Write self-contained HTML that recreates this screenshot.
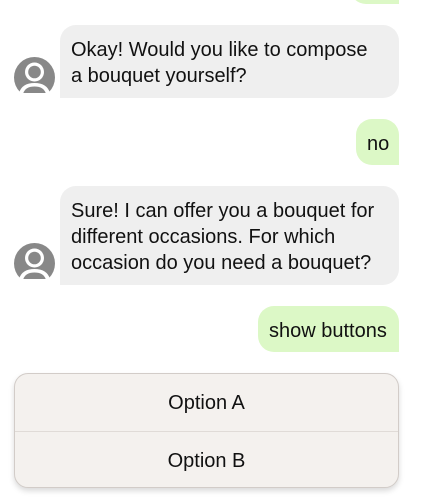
<!DOCTYPE html>
<html><head><style>
body{margin:0;width:421px;height:500px;overflow:hidden;background:#fff;font-family:"Liberation Sans",Arial,sans-serif;font-size:20px;color:#111;position:relative}
.b{position:absolute;box-sizing:border-box;line-height:26px;padding:12px 11px 9px;white-space:nowrap}
.bot{background:#efefef;border-radius:16px 16px 16px 0;left:60px;width:339px}
.me{background:#dcf8c6;border-radius:16px 16px 0 16px;right:22px}
.av{position:absolute;left:14px;width:41px;height:41px}
.opts{position:absolute;left:14px;top:373px;width:385px;height:115px;box-sizing:border-box;border:1px solid #d2ccc8;border-radius:14px;background:#f4f1ee;box-shadow:0 3px 6px rgba(0,0,0,.15);overflow:hidden}
.opts div{height:57px;line-height:59px;text-align:center;font-size:20px}
.opts div+div{border-top:1px solid #e0dbd7}
</style></head><body>
<div class="b me" style="top:-40px;width:49px;height:44px"></div>
<div class="b bot" style="top:25px;height:73px">Okay! Would you like to compose<br>a bouquet yourself?</div>
<svg class="av" style="top:57px" viewBox="0 0 41 41"><defs><clipPath id="c1"><rect width="41" height="36"/></clipPath></defs><g clip-path="url(#c1)"><circle cx="20.5" cy="20.5" r="20.5" fill="#888"/><circle cx="20.5" cy="15" r="9.5" fill="#fff"/><circle cx="20.5" cy="15" r="6.3" fill="#888"/><path d="M5 36 Q8 26 20.5 26 Q33 26 36 36 Z" fill="#fff"/><path d="M9 37 Q11 29.5 20.5 29.5 Q30 29.5 32 37Z" fill="#888"/></g></svg>
<div class="b me" style="top:119px;height:46px;width:43px">no</div>
<div class="b bot" style="top:186px;height:99px">Sure! I can offer you a bouquet for<br>different occasions. For which<br>occasion do you need a bouquet?</div>
<svg class="av" style="top:243px" viewBox="0 0 41 41"><defs><clipPath id="c2"><rect width="41" height="36"/></clipPath></defs><g clip-path="url(#c2)"><circle cx="20.5" cy="20.5" r="20.5" fill="#888"/><circle cx="20.5" cy="15" r="9.5" fill="#fff"/><circle cx="20.5" cy="15" r="6.3" fill="#888"/><path d="M5 36 Q8 26 20.5 26 Q33 26 36 36 Z" fill="#fff"/><path d="M9 37 Q11 29.5 20.5 29.5 Q30 29.5 32 37Z" fill="#888"/></g></svg>
<div class="b me" style="top:306px;height:46px;width:141px">show buttons</div>
<div class="opts"><div>Option A</div><div>Option B</div></div>
</body></html>
